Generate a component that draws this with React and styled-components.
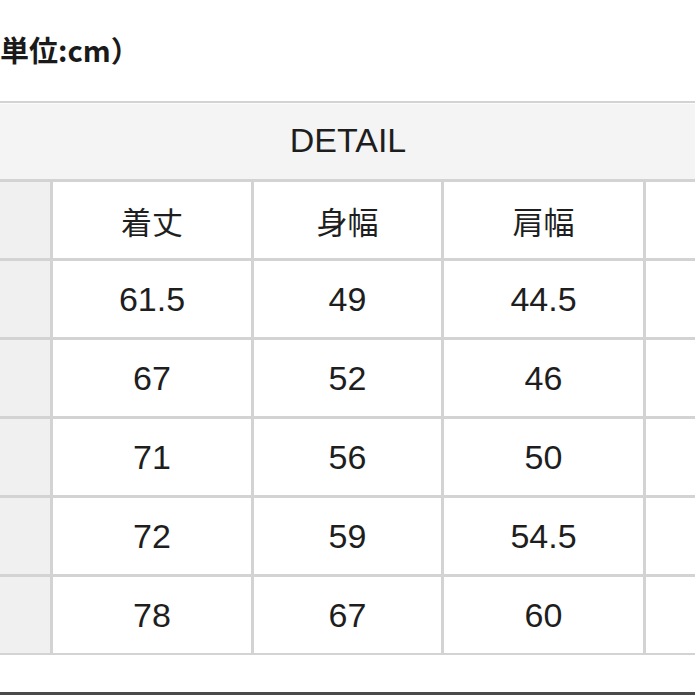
import { createGlobalStyle, styled } from "styled-components";

const GlobalStyle = createGlobalStyle`
    html, body {
        margin: 0;
        padding: 0;
        background: #fff;
        overflow: hidden;
    }
`;

const headers = ["着丈", "身幅", "肩幅"];
const rows = [
    ["61.5", "49", "44.5"],
    ["67", "52", "46"],
    ["71", "56", "50"],
    ["72", "59", "54.5"],
    ["78", "67", "60"],
];

export default function App() {
    return (
        <PageSC>
            <GlobalStyle />
            <TitleSC>単位:cm）</TitleSC>
            <TableSC>
                <DetailSC>DETAIL</DetailSC>
                <SideCellSC />
                {headers.map((h) => (
                    <CellSC key={h} $cjk>{h}</CellSC>
                ))}
                <CellSC />
                {rows.map((r, i) => [
                    <SideCellSC key={`s${i}`} />,
                    ...r.map((v, j) => <CellSC key={`${i}-${j}`}>{v}</CellSC>),
                    <CellSC key={`e${i}`} />,
                ])}
            </TableSC>
            <BottomLineSC />
        </PageSC>
    );
}

const PageSC = styled.div`
    width: 695px;
    height: 695px;
    overflow: hidden;
    display: flex;
    flex-direction: column;
    align-items: flex-start;
`;

const TitleSC = styled.h2`
    margin: 0;
    height: 101px;
    display: flex;
    align-items: center;
    padding-bottom: 4px;
    box-sizing: border-box;
    font-family: "Noto Sans CJK JP", "Noto Sans", sans-serif;
    font-size: 29px;
    font-weight: 700;
    color: #1a1a1a;
`;

const TableSC = styled.div`
    flex-shrink: 0;
    display: grid;
    grid-template-columns: 50px 198px 187px 199px 80px;
    grid-auto-rows: 76px;
    gap: 3px;
    padding: 2px 0;
    background: #d3d3d3;
    width: max-content;
`;

const DetailSC = styled.div`
    grid-column: 1 / -1;
    background: #f4f4f4;
    border-top: 1px solid #fbfbfb;
    display: flex;
    align-items: center;
    justify-content: center;
    padding: 0 30px 2px 0;
    box-sizing: border-box;
    font-family: "Liberation Sans", Arial, sans-serif;
    font-size: 34px;
    color: #1e1e1e;
`;

const SideCellSC = styled.div`
    background: #f0f0f0;
`;

const CellSC = styled.div`
    background: #fff;
    display: flex;
    align-items: center;
    justify-content: center;
    font-family: ${(p) =>
        p.$cjk
            ? `"Noto Sans CJK JP", "Noto Sans", sans-serif`
            : `"Liberation Sans", Arial, sans-serif`};
    font-size: ${(p) => (p.$cjk ? "31px" : "34px")};
    color: #1e1e1e;
`;

const BottomLineSC = styled.div`
    align-self: stretch;
    margin-top: auto;
    height: 3px;
    background: #4a4a4a;
`;
